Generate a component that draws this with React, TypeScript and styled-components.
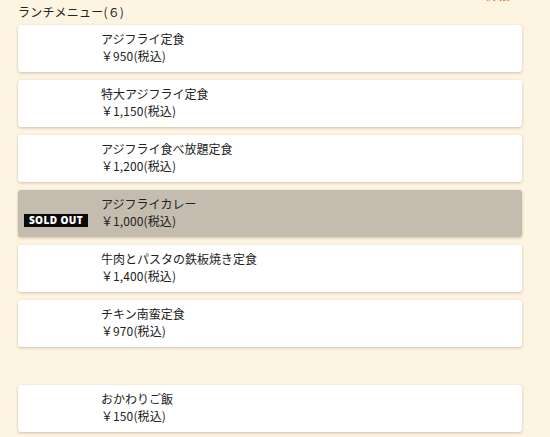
import React from "react";
import styled, { createGlobalStyle } from "styled-components";

const Global = createGlobalStyle`
  html, body { margin: 0; padding: 0; background: #fef4e2; }
  body { font-family: "Noto Sans CJK JP", "Noto Sans", sans-serif; color: #222; overflow: hidden; }
`;

const Page = styled.div`
  width: 550px;
  height: 437px;
  padding: 0 28px 0 18px;
  box-sizing: border-box;
  display: flex;
  flex-direction: column;
`;

const TopLink = styled.div`
  display: flex;
  justify-content: flex-end;
  margin-top: -12px;
  height: 14px;
  font-size: 12px;
  line-height: 14px;
  font-weight: bold;
  color: #e8650a;
`;

const Heading = styled.div`
  font-size: 12px;
  line-height: 14px;
  margin: 3px 0 6px;
  letter-spacing: 0.2px;
`;

const List = styled.div<{ $gap?: number }>`
  display: flex;
  flex-direction: column;
  gap: 8px;
  margin-top: ${(p) => p.$gap ?? 0}px;
`;

const Card = styled.div<{ $soldOut?: boolean }>`
  height: 47px;
  box-sizing: border-box;
  display: flex;
  border-radius: 3px;
  background: ${(p) => (p.$soldOut ? "#c4bcae" : "#ffffff")};
  box-shadow: 0 1px 3px rgba(120, 95, 60, 0.35);
`;

const Badge = styled.div`
  width: 83px;
  flex: none;
  display: flex;
  align-items: flex-end;
  padding: 0 0 10px 6px;
  box-sizing: border-box;
`;

const SoldOut = styled.span`
  background: #0a0a0a;
  color: #fff;
  font-family: "Open Sans", "DejaVu Sans", sans-serif;
  font-weight: 800;
  font-size: 10px;
  line-height: 13px;
  width: 64px;
  text-align: center;
  letter-spacing: 0.4px;
`;

const Info = styled.div`
  padding-top: 5px;
  font-size: 12px;
  line-height: 17px;
`;

const Name = styled.div``;

const Price = styled.div`
  letter-spacing: 0.1px;
`;

type Item = { name: string; price: string; soldOut?: boolean };

const lunch: Item[] = [
  { name: "アジフライ定食", price: "￥950(税込)" },
  { name: "特大アジフライ定食", price: "￥1,150(税込)" },
  { name: "アジフライ食べ放題定食", price: "￥1,200(税込)" },
  { name: "アジフライカレー", price: "￥1,000(税込)", soldOut: true },
  { name: "牛肉とパスタの鉄板焼き定食", price: "￥1,400(税込)" },
  { name: "チキン南蛮定食", price: "￥970(税込)" },
];

const extra: Item[] = [{ name: "おかわりご飯", price: "￥150(税込)" }];

const MenuCard = ({ item }: { item: Item }) => (
  <Card $soldOut={item.soldOut}>
    <Badge>{item.soldOut && <SoldOut>SOLD OUT</SoldOut>}</Badge>
    <Info>
      <Name>{item.name}</Name>
      <Price>{item.price}</Price>
    </Info>
  </Card>
);

export default function App() {
  return (
    <Page>
      <Global />
      <TopLink>詳細へ</TopLink>
      <Heading>ランチメニュー(６)</Heading>
      <List>
        {lunch.map((i) => (
          <MenuCard key={i.name} item={i} />
        ))}
      </List>
      <List $gap={38}>
        {extra.map((i) => (
          <MenuCard key={i.name} item={i} />
        ))}
      </List>
    </Page>
  );
}
